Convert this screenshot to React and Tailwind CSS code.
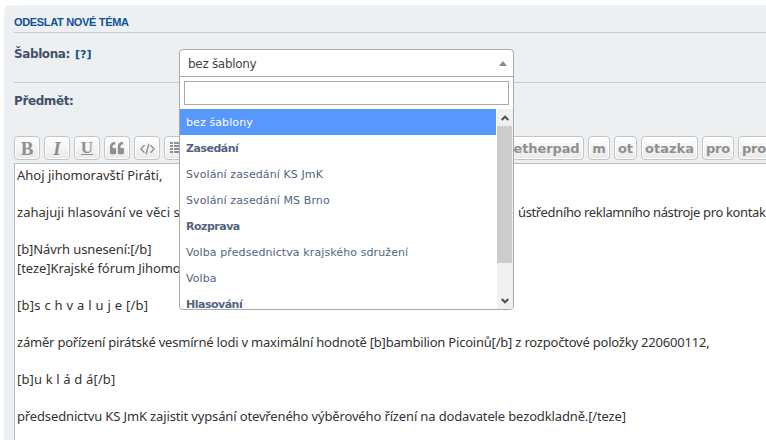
import { FaQuoteLeft } from 'react-icons/fa';

const verdana = "font-['DejaVu_Sans',Verdana,sans-serif]";

function ToolButton({ className = '', children }) {
  return (
    <div
      className={`flex h-6 shrink-0 items-center justify-center rounded-[4px] border border-[#c7c3bf] bg-linear-to-b from-white to-[#e9e9e9] text-[#8f8f8f] shadow-[inset_0_0_0_1px_#ffffff] ${className}`}
    >
      {children}
    </div>
  );
}

function CodeIcon() {
  return (
    <svg width="15" height="12" viewBox="0 0 15 12" fill="none" stroke="currentColor" strokeWidth="1.4">
      <path d="M4.5 2.2.9 6l3.6 3.8M10.5 2.2 14.1 6l-3.6 3.8M8.9.8 6.1 11.2" />
    </svg>
  );
}

function ListIcon() {
  return (
    <svg width="14" height="12" viewBox="0 0 14 12" fill="currentColor" shapeRendering="crispEdges">
      <path d="M0 0h3v2H0zM4 0h10v2H4zM0 3h3v2H0zM4 3h10v2H4zM0 6h3v2H0zM4 6h10v2H4zM0 9h3v2H0zM4 9h10v2H4z" />
    </svg>
  );
}

function Toolbar() {
  return (
    <div className="flex h-6 gap-1">
      <ToolButton className="w-[26px] pt-[2px] font-['Liberation_Serif',serif] text-[19px] font-bold">B</ToolButton>
      <ToolButton className="w-[26px] pt-[2px] font-['Liberation_Serif',serif] text-[19px] font-bold italic">I</ToolButton>
      <ToolButton className="w-[26px] font-['Liberation_Serif',serif] text-[17px] font-bold underline">U</ToolButton>
      <ToolButton className="w-[26px]"><FaQuoteLeft size={14} /></ToolButton>
      <ToolButton className="w-[26px] pt-[2px]"><CodeIcon /></ToolButton>
      <ToolButton className="w-[26px]"><ListIcon /></ToolButton>
      <div className="w-[306px] shrink-0" />
      <div className={`flex gap-1 text-[13px] font-bold ${verdana}`}>
        <ToolButton className="w-[80px] pt-[2px] pl-[5px] tracking-[-0.1px]">etherpad</ToolButton>
        <ToolButton className="w-[22px] pt-[2px]">m</ToolButton>
        <ToolButton className="w-[23px] pt-[2px]">ot</ToolButton>
        <ToolButton className="w-[57px] pt-[2px]">otazka</ToolButton>
        <ToolButton className="w-[32px] pt-[2px] tracking-[-0.2px]">pro</ToolButton>
        <ToolButton className="w-[50px] justify-start! pt-[2px] pl-[3px] tracking-[-0.2px]">pro</ToolButton>
      </div>
    </div>
  );
}

function Editor() {
  return (
    <div className="mt-[3px] h-[300px] border-t border-l border-[#b4bac0] bg-white pt-[2px] pl-[2px] font-['Noto_Sans',sans-serif] text-[13px] leading-[18.5px] whitespace-pre text-[#333333]">
      <div>Ahoj jihomoravští Piráti,</div>
      <div>{' '}</div>
      <div className="flex">
        <span className="w-[501px] shrink-0 tracking-[0.03px]">zahajuji hlasování ve věci s</span>
        <span className="tracking-[-0.36px]">ústředního reklamního nástroje pro kontak</span>
      </div>
      <div>{' '}</div>
      <div className="tracking-[-0.1px]">[b]Návrh usnesení:[/b]</div>
      <div className="tracking-[-0.08px]">[teze]Krajské fórum Jihomo</div>
      <div>{' '}</div>
      <div className="tracking-[0.26px]">[b]s c h v a l u j e [/b]</div>
      <div>{' '}</div>
      <div className="tracking-[-0.21px]">záměr pořízení pirátské vesmírné lodi v maximální hodnotě [b]bambilion Picoinů[/b] z rozpočtové položky 220600112,</div>
      <div>{' '}</div>
      <div className="tracking-[0.15px]">[b]u k l á d á[/b]</div>
      <div>{' '}</div>
      <div className="tracking-[-0.14px]">předsednictvu KS JmK zajistit vypsání otevřeného výběrového řízení na dodavatele bezodkladně.[/teze]</div>
    </div>
  );
}

const options = [
  { label: 'bez šablony', selected: true },
  { label: 'Zasedání', group: true },
  { label: 'Svolání zasedání KS JmK' },
  { label: 'Svolání zasedání MS Brno' },
  { label: 'Rozprava', group: true },
  { label: 'Volba předsednictva krajského sdružení' },
  { label: 'Volba' },
  { label: 'Hlasování', group: true },
];

function optionStyle(o) {
  if (o.selected) return 'bg-[#5897fb] text-white tracking-[0.1px]';
  if (o.group) return 'font-bold text-[#536482] tracking-[-0.5px]';
  return 'text-[#536482] tracking-[0.1px]';
}

function Dropdown() {
  return (
    <div className={`absolute top-[49px] left-[179px] flex h-[261px] w-[335px] flex-col overflow-hidden rounded-[4px] border border-[#aaaaaa] bg-white ${verdana}`}>
      <div className="flex h-[27px] shrink-0 items-center justify-between border-b border-[#aaaaaa] pt-px pr-[6px] pl-2 text-[12px] text-[#444444]">
        <span className="tracking-[-0.3px]">bez šablony</span>
        <span className="h-0 w-0 border-x-4 border-b-[5px] border-x-transparent border-b-[#888888]" />
      </div>
      <div className="mx-1 mt-1 h-6 shrink-0 border border-[#aaaaaa]" />
      <div className="mt-1 flex min-h-0 flex-1">
        <div className="w-[316px] overflow-hidden text-[11px]">
          {options.map((o) => (
            <div key={o.label} className={`flex h-[26px] items-center px-[6px] pt-[2px] whitespace-nowrap ${optionStyle(o)}`}>
              {o.label}
            </div>
          ))}
        </div>
        <div className="ml-px flex w-4 flex-col bg-[#f0f0f0]">
          <div className="flex h-[17px] items-center justify-center">
            <svg width="8" height="6" viewBox="0 0 8 6" fill="none" stroke="#505050" strokeWidth="2"><path d="M.7 5 4 1.7 7.3 5" /></svg>
          </div>
          <div className="mr-px h-[137px] bg-[#cdcdcd]" />
          <div className="flex-1" />
          <div className="flex h-[17px] items-center justify-center">
            <svg width="8" height="6" viewBox="0 0 8 6" fill="none" stroke="#505050" strokeWidth="2"><path d="M.7 1 4 4.3 7.3 1" /></svg>
          </div>
        </div>
      </div>
    </div>
  );
}

export default function App() {
  return (
    <div className="relative h-[440px] w-[766px] overflow-hidden bg-white pt-[5px] pl-1">
      <div className="h-[450px] rounded-tl-[7px] bg-[#ecf0f3] pl-[10px]">
        <div className="h-7 border-b border-[#cccccc] pt-[9px] font-['Liberation_Sans',sans-serif] text-[11px] leading-4 font-bold text-[#115098]">
          <span className="tracking-[-0.33px]">ODESLAT NOVÉ TÉMA</span>
        </div>
        <div className={`flex h-[50px] border-b border-[#cccccc] pt-[13px] text-[12px] leading-4 font-bold text-[#425067] ${verdana}`}>
          <span className="w-[61px] tracking-[-0.4px]">Šablona:</span>
          <span className="pt-px text-[11px] text-[#105289]">[?]</span>
        </div>
        <div className={`h-[53px] pt-[10px] text-[12px] leading-4 font-bold tracking-[-0.4px] text-[#425067] ${verdana}`}>
          Předmět:
        </div>
        <Toolbar />
        <Editor />
      </div>
      <Dropdown />
    </div>
  );
}
